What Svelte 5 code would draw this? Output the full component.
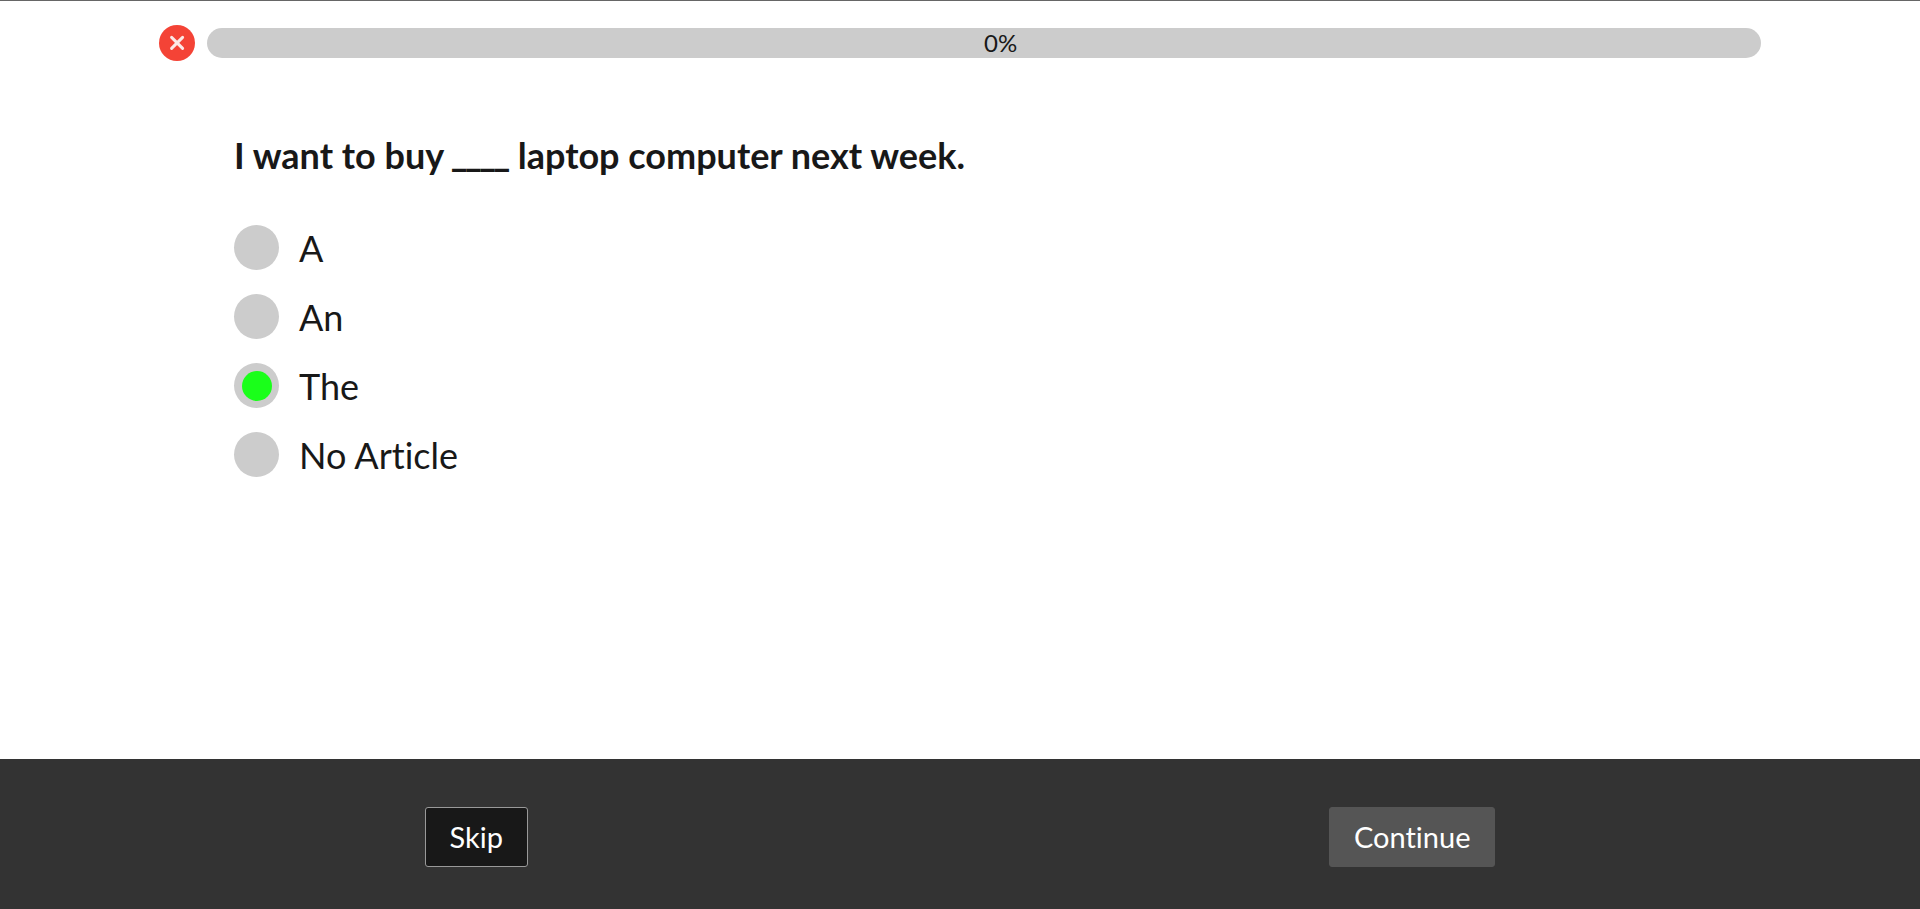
<script>
  const options = ['A', 'An', 'The', 'No Article'];
  let selected = $state('The');
  let progress = $state(0);
</script>

<div class="page">
  <header>
    <button class="close" type="button" aria-label="Close">
      <svg viewBox="0 0 36 36" width="36" height="36" aria-hidden="true">
        <circle cx="18" cy="18" r="18" fill="#f44336" />
        <path d="M12.6 12.4 L23.6 23.4 M23.6 12.4 L12.6 23.4" stroke="#fbe9e7" stroke-width="3" stroke-linecap="round" />
      </svg>
    </button>
    <div class="bar" role="progressbar" aria-label="Progress" aria-valuenow={progress} aria-valuemin="0" aria-valuemax="100">
      <div class="fill" style="width: {progress}%"></div>
      <span class="percent">{progress}%</span>
    </div>
  </header>

  <main>
    <h1 id="question">I want to buy <span class="blank">____</span> laptop computer next week.</h1>
    <div class="options" role="radiogroup" aria-labelledby="question">
      {#each options as option}
        <label>
          <input type="radio" name="answer" value={option} bind:group={selected} />
          <span class="text">{option}</span>
        </label>
      {/each}
    </div>
  </main>

  <footer>
    <button class="action skip" type="button">Skip</button>
    <button class="action continue" type="button">Continue</button>
  </footer>
</div>

<style>
  :global(body) {
    margin: 0;
    background: #fff;
  }

  .page {
    display: flex;
    flex-direction: column;
    box-sizing: border-box;
    min-height: 100vh;
    border-top: 1px solid #666;
    color: #181818;
    font-family: Lato, sans-serif;
    font-variant-ligatures: none;
  }

  header {
    display: flex;
    align-items: center;
    gap: 12px;
    padding: 24px 159px 0;
  }

  .close {
    display: block;
    flex: none;
    padding: 0;
    border: 0;
    border-radius: 50%;
    background: none;
    cursor: pointer;
  }

  .close svg {
    display: block;
  }

  .bar {
    position: relative;
    flex: 1;
    height: 30px;
    overflow: hidden;
    border-radius: 15px;
    background: #ccc;
  }

  .fill {
    height: 100%;
    background: #1aff1a;
  }

  .percent {
    position: absolute;
    top: 0;
    left: 50%;
    font-size: 24px;
    line-height: 30px;
  }

  main {
    flex: 1;
    padding: 72px 234px 48px;
  }

  h1 {
    margin: 0;
    font-size: 36px;
    font-weight: 700;
    line-height: 44px;
  }

  .blank {
    font-family: Roboto, sans-serif;
    font-size: 32px;
    line-height: 32px;
  }

  .options {
    display: flex;
    flex-direction: column;
    align-items: flex-start;
    gap: 24px;
    margin-top: 48px;
  }

  label {
    display: flex;
    align-items: center;
    gap: 20px;
    font-size: 36px;
    line-height: 43px;
    cursor: pointer;
  }

  .text {
    padding-top: 2px;
  }

  input {
    display: grid;
    place-content: center;
    flex: none;
    width: 45px;
    height: 45px;
    margin: 0;
    border-radius: 50%;
    background: #ccc;
    appearance: none;
    cursor: pointer;
  }

  input:checked::before {
    width: 30px;
    height: 30px;
    border-radius: 50%;
    background: #1aff1a;
    content: '';
  }

  footer {
    display: flex;
    justify-content: space-around;
    padding: 48px 24px 42px;
    background: #333;
  }

  .action {
    height: 60px;
    padding: 0 24px;
    border: 1px solid #555;
    border-radius: 3px;
    background: #555;
    color: #fff;
    font-family: inherit;
    font-size: 29px;
    font-variant-ligatures: none;
    line-height: 36px;
    cursor: pointer;
  }

  .skip {
    border-color: #999;
    background: #181818;
  }
</style>
